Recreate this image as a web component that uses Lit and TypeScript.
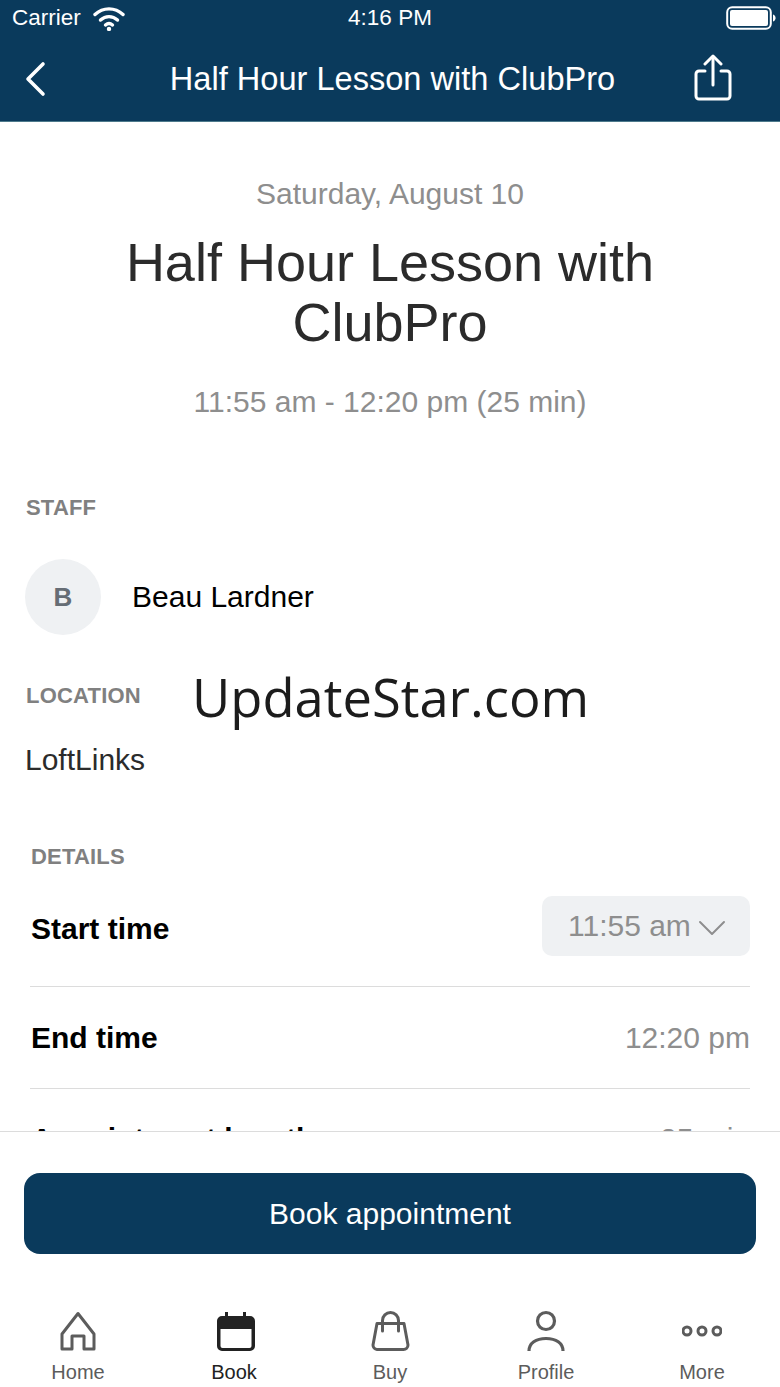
import { LitElement, html, css } from "lit";
import { customElement } from "lit/decorators.js";

const tabs = [
  {
    label: "Home",
    icon: html`<svg viewBox="0 0 40 44" fill="none" stroke="currentColor" stroke-width="3" stroke-linejoin="round"><path d="M20 3.5 L36 24 V39 H26 V26 H14 V39 H4 V24 Z" /></svg>`,
  },
  {
    label: "Book",
    active: true,
    icon: html`<svg viewBox="0 0 44 44"><path fill="currentColor" d="M13 2h3v4h15V2h3v4h4a5 5 0 0 1 5 5v25a5 5 0 0 1-5 5H10a5 5 0 0 1-5-5V11a5 5 0 0 1 5-5h3z" /><path fill="#fff" d="M8.5 19h31v17a2 2 0 0 1-2 2H10.5a2 2 0 0 1-2-2z" /></svg>`,
  },
  {
    label: "Buy",
    icon: html`<svg viewBox="0 0 40 44" fill="none" stroke="currentColor" stroke-width="3" stroke-linecap="round" stroke-linejoin="round"><path d="M7 13.5H34L38 35a4.5 4.5 0 0 1-4.500 4.500H7A4.500 4.500 0 0 1 3 35Z" /><path d="M12.5 21V10.5a8 8 0 0 1 16 0V21" /></svg>`,
  },
  {
    label: "Profile",
    icon: html`<svg viewBox="0 0 40 44" fill="none" stroke="currentColor" stroke-width="3.2"><circle cx="20" cy="11" r="8.5" /><path d="M3 41C3 33 10 28.5 20 28.5S37 33 37 41" /></svg>`,
  },
  {
    label: "More",
    icon: html`<svg viewBox="0 0 40 44" fill="none" stroke="currentColor" stroke-width="3"><circle cx="5" cy="21" r="4" /><circle cx="20" cy="21" r="4" /><circle cx="35" cy="21" r="4" /></svg>`,
  },
];

@customElement("app-root")
export class AppRoot extends LitElement {
  static override styles = css`
    :host {
      display: block;
      font-family: "Liberation Sans", Arial, sans-serif;
      color: #000;
    }
    .page {
      position: relative;
      height: 1387px;
      display: flex;
      flex-direction: column;
      background: #fff;
      overflow: hidden;
    }
    .header {
      height: 122px;
      flex: none;
      background: #0a3a5c;
      color: #fff;
      border-bottom: 1px solid #4d7a8c;
      box-sizing: border-box;
    }
    .status {
      height: 36px;
      display: grid;
      grid-template-columns: 1fr auto 1fr;
      align-items: center;
      padding: 0 12px;
      font-size: 22.5px;
    }
    .carrier {
      display: flex;
      align-items: center;
      gap: 12px;
    }
    .carrier svg {
      width: 32px;
      height: 26px;
    }
    .battery {
      justify-self: end;
      width: 50px;
      height: 24px;
      display: block;
      margin-right: -8px;
    }
    .nav {
      height: 85px;
      display: grid;
      grid-template-columns: 72px 1fr 72px;
      align-items: center;
    }
    .nav svg {
      display: block;
    }
    .back {
      width: 24px;
      height: 36px;
      margin-left: 23px;
    }
    .share {
      width: 40px;
      height: 48px;
      justify-self: end;
      margin-right: 47px;
      margin-top: -1px;
    }
    .nav-title {
      text-align: center;
      font-size: 32.6px;
      white-space: nowrap;
      margin-top: 1px;
      padding-left: 5px;
    }
    .content {
      flex: 1;
      min-height: 0;
      overflow: hidden;
    }
    .hero {
      padding-top: 54px;
      text-align: center;
      color: #8e8e8e;
    }
    .date {
      font-size: 30px;
      line-height: 36px;
    }
    .title {
      margin: 20px 60px 0;
      font-size: 54px;
      font-weight: 400;
      line-height: 60px;
      color: #2b2b2b;
    }
    .duration {
      margin-top: 32px;
      font-size: 30px;
      line-height: 36px;
    }
    .section-label {
      font-size: 22px;
      line-height: 26px;
      font-weight: 700;
      color: #808080;
      margin-left: 1px;
      letter-spacing: 0.2px;
    }
    .staff {
      padding: 75px 25px 0;
    }
    .person {
      margin-top: 38px;
      display: flex;
      align-items: center;
      gap: 31px;
      font-size: 30px;
    }
    .avatar {
      width: 76px;
      height: 76px;
      border-radius: 50%;
      background: #eff1f3;
      color: #666d75;
      font-size: 26px;
      font-weight: 700;
      display: flex;
      align-items: center;
      justify-content: center;
    }
    .location {
      padding: 48px 25px 0;
    }
    .location-name {
      margin-top: 33px;
      font-size: 30px;
      line-height: 36px;
      color: #2b2b2b;
    }
    .details {
      padding: 66px 30px 0;
    }
    .row {
      display: flex;
      justify-content: space-between;
      font-size: 30px;
      font-weight: 700;
      border-bottom: 1px solid #dcdcdc;
    }
    .row > span:first-child {
      margin-left: 1px;
    }
    .row.start {
      margin-top: 26px;
      height: 91px;
      box-sizing: border-box;
      align-items: flex-start;
    }
    .row.start > span:first-child {
      margin-top: 16px;
    }
    .row.end {
      height: 102px;
      box-sizing: border-box;
      align-items: center;
    }
    .row.length {
      height: 100px;
      align-items: center;
      border-bottom: none;
    }
    .value {
      font-size: 30px;
      font-weight: 400;
      color: #8e8e8e;
    }
    .select {
      width: 208px;
      height: 60px;
      box-sizing: border-box;
      padding-left: 26px;
      border-radius: 10px;
      background: #eff1f3;
      display: flex;
      align-items: center;
      gap: 7px;
    }
    .select svg {
      width: 28px;
      height: 18px;
      margin-top: 4px;
    }
    .footer {
      flex: none;
      height: 256px;
      background: #fff;
      border-top: 1px solid #dcdcdc;
      box-sizing: border-box;
      display: flex;
      flex-direction: column;
    }
    .book {
      margin: 41px 24px 0;
      height: 81px;
      border: none;
      border-radius: 16px;
      background: #0a3a5c;
      color: #fff;
      font: 400 30px "Liberation Sans", Arial, sans-serif;
    }
    .tabs {
      margin-top: 56px;
      display: grid;
      grid-template-columns: repeat(5, 1fr);
    }
    .tab {
      display: flex;
      flex-direction: column;
      align-items: center;
      color: #5c5c5c;
      font-size: 20px;
      line-height: 24px;
    }
    .tab.active {
      color: #222;
    }
    .tab svg {
      width: 40px;
      height: 44px;
      margin-bottom: 6px;
    }
    .tab.active svg {
      width: 44px;
    }
    .watermark {
      position: absolute;
      left: 192px;
      top: 659px;
      font-family: "Open Sans", sans-serif;
      font-size: 52.5px;
      line-height: 76px;
      color: #1c1c1c;
    }
  `;

  override render() {
    return html`
      <div class="page">
        <header class="header">
          <div class="status">
            <div class="carrier">
              Carrier
              <svg viewBox="0 0 32 26" fill="none" stroke="#fff" stroke-width="3.4" stroke-linecap="round">
                <path d="M2 9.5C10 2 22 2 30 9.5" />
                <path d="M7.5 15C12.5 10.5 19.5 10.5 24.5 15" />
                <path d="M12.5 20C14.8 18 17.2 18 19.5 20" />
                <circle cx="16" cy="24" r="1.4" fill="#fff" stroke-width="1.6" />
              </svg>
            </div>
            <div>4:16 PM</div>
            <svg class="battery" viewBox="0 0 50 24" fill="none">
              <rect x="1.2" y="1.2" width="43.6" height="21.6" rx="5" stroke="#fff" stroke-width="2" />
              <rect x="4" y="4" width="38" height="16" rx="2" fill="#fff" />
              <path d="M47 8.5c1.8.6 2.6 2 2.6 3.5s-.8 2.9-2.6 3.5z" fill="#fff" />
            </svg>
          </div>
          <div class="nav">
            <svg class="back" viewBox="0 0 24 36" fill="none" stroke="#fff" stroke-width="3.6" stroke-linecap="round" stroke-linejoin="round">
              <path d="M20 3 L5 18 L20 33" />
            </svg>
            <div class="nav-title">Half Hour Lesson with ClubPro</div>
            <svg class="share" viewBox="0 0 40 48" fill="none" stroke="#fff" stroke-width="3" stroke-linecap="round" stroke-linejoin="round">
              <path d="M12 17H6a3 3 0 0 0-3 3V42a3 3 0 0 0 3 3H34a3 3 0 0 0 3-3V20a3 3 0 0 0-3-3H28" />
              <path d="M20 31V3" />
              <path d="M12 10L20 2L28 10" />
            </svg>
          </div>
        </header>

        <main class="content">
          <section class="hero">
            <div class="date">Saturday, August 10</div>
            <h1 class="title">Half Hour Lesson with ClubPro</h1>
            <div class="duration">11:55 am - 12:20 pm (25 min)</div>
          </section>

          <section class="staff">
            <div class="section-label">STAFF</div>
            <div class="person">
              <div class="avatar">B</div>
              <div>Beau Lardner</div>
            </div>
          </section>

          <section class="location">
            <div class="section-label">LOCATION</div>
            <div class="location-name">LoftLinks</div>
          </section>

          <section class="details">
            <div class="section-label">DETAILS</div>
            <div class="row start">
              <span>Start time</span>
              <div class="select value">
                11:55 am
                <svg viewBox="0 0 28 18" fill="none" stroke="#8e8e8e" stroke-width="2" stroke-linecap="round" stroke-linejoin="round">
                  <path d="M2 3L14 15L26 3" />
                </svg>
              </div>
            </div>
            <div class="row end">
              <span>End time</span>
              <span class="value">12:20 pm</span>
            </div>
            <div class="row length">
              <span>Appointment length</span>
              <span class="value">25 min</span>
            </div>
          </section>
        </main>

        <footer class="footer">
          <button class="book">Book appointment</button>
          <nav class="tabs">
            ${tabs.map(
              (t) => html`
                <div class="tab ${t.active ? "active" : ""}">
                  ${t.icon}
                  <span>${t.label}</span>
                </div>
              `
            )}
          </nav>
        </footer>

        <div class="watermark">UpdateStar.com</div>
      </div>
    `;
  }
}

declare global {
  interface HTMLElementTagNameMap {
    "app-root": AppRoot;
  }
}
